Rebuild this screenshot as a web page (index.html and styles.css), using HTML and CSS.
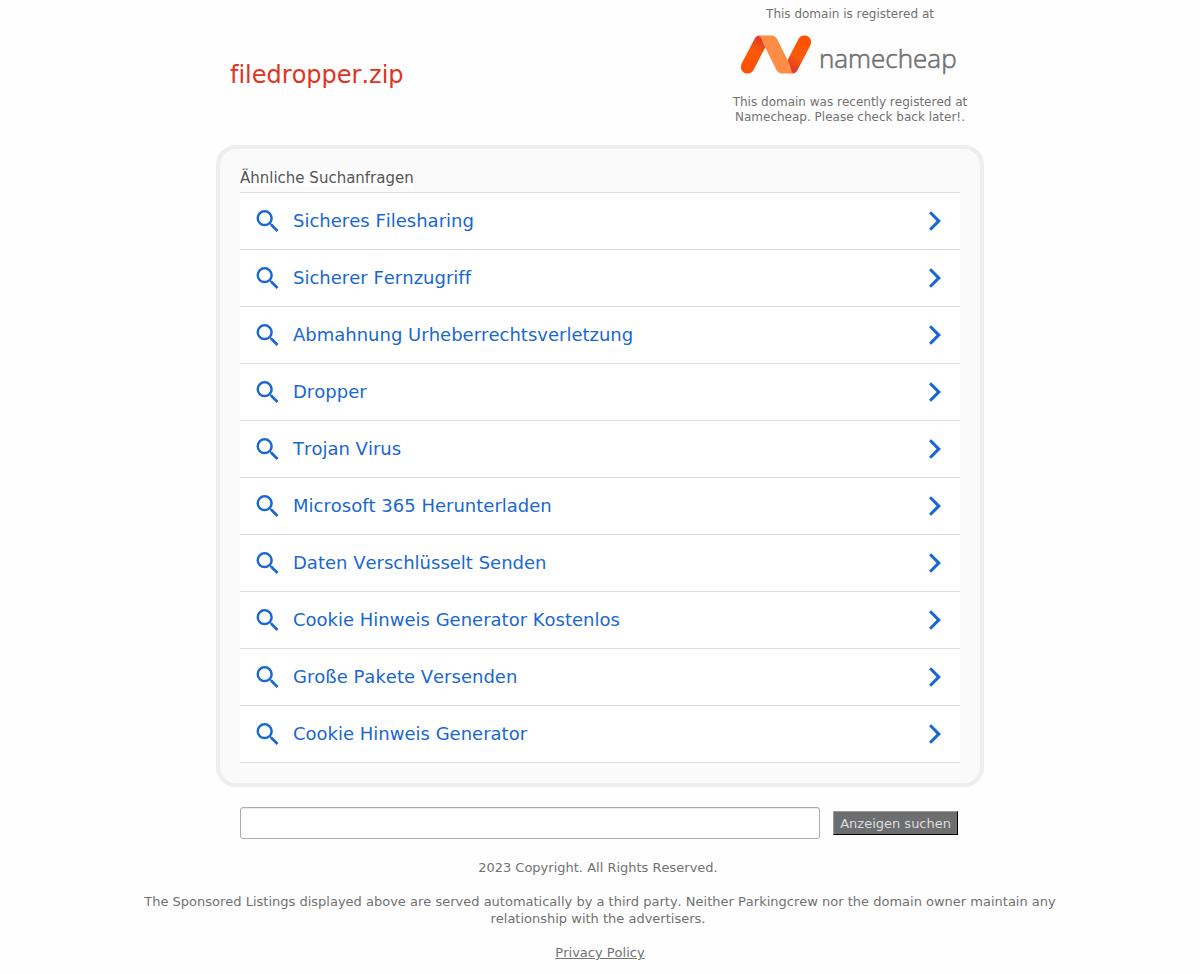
FILE: index.html
```
<!DOCTYPE html>
<html lang="de">
<head>
<meta charset="utf-8">
<meta name="viewport" content="width=device-width, initial-scale=1">
<title>filedropper.zip</title>
<link rel="stylesheet" href="styles.css">
</head>
<body>
<svg class="sprite" aria-hidden="true">
  <symbol id="search" viewBox="3 3 17.5 17.5"><path d="M15.5 14h-.79l-.28-.27A6.471 6.471 0 0 0 16 9.500 6.500 6.500 0 1 0 9.500 16c1.610 0 3.090-.590 4.230-1.570l.270.280v.790l5 4.990L20.490 19l-4.990-5zm-6 0C7.010 14 5 11.990 5 9.500S7.010 5 9.500 5 14 7.010 14 9.500 11.990 14 9.500 14z"/></symbol>
  <symbol id="chevron" viewBox="0.5 0.5 12.2 20"><path d="M2.700 .500.500 2.700 8.200 10.500.500 18.300l2.200 2.200L12.700 10.500z"/></symbol>
</svg>
<header class="header">
  <h1 class="domain">filedropper.zip</h1>
  <div class="registrar">
    <p class="registrar-text">This domain is registered at</p>
    <svg class="logo" viewBox="0 0 220 44" role="img" aria-label="namecheap">
      <defs>
        <linearGradient id="left" gradientUnits="userSpaceOnUse" x1="8" y1="36" x2="22" y2="6"><stop offset="0" stop-color="#ff5000"/><stop offset=".6" stop-color="#fa5a08"/><stop offset="1" stop-color="#dc3a2c"/></linearGradient>
        <linearGradient id="right" gradientUnits="userSpaceOnUse" x1="66" y1="6" x2="51" y2="36"><stop offset="0" stop-color="#ff5000"/><stop offset=".6" stop-color="#fa5a08"/><stop offset="1" stop-color="#dc3a2c"/></linearGradient>
      </defs>
      <path d="M20 2.500C17 2.500 15.500 4 14.500 6L1.700 30.500C-.500 35 2 40.500 7.500 40.500c3 0 5-1.500 6.300-4L27 11z" fill="url(#left)"/>
      <path d="M52 40.500c3 0 4.500-1.500 5.500-3.500L70.300 12.500C72.500 8 70 2.500 64.500 2.500c-3 0-5 1.500-6.300 4L45 32z" fill="url(#right)"/>
      <path d="M19 2.500H31c3 0 5 1.500 6.300 4L49 30c2.500 5 1.500 9 5 10.500H42.500c-3 0-5-1.500-6.300-4L23.500 11C21.800 7 21.500 3.500 17 2.500z" fill="#ff8c44"/>
      <text class="logo-text" x="79" y="35">namecheap</text>
    </svg>
    <p class="registrar-text">This domain was recently registered at Namecheap. Please check back later!.</p>
  </div>
</header>
<main class="content">
  <section class="panel">
    <h2 class="panel-title"><span class="panel-label">Ähnliche Suchanfragen</span></h2>
    <nav class="links">
      <a class="row" href="#"><svg class="search-icon"><use href="#search"/></svg><span class="term">Sicheres Filesharing</span><svg class="chevron"><use href="#chevron"/></svg></a>
      <a class="row" href="#"><svg class="search-icon"><use href="#search"/></svg><span class="term">Sicherer Fernzugriff</span><svg class="chevron"><use href="#chevron"/></svg></a>
      <a class="row" href="#"><svg class="search-icon"><use href="#search"/></svg><span class="term">Abmahnung Urheberrechtsverletzung</span><svg class="chevron"><use href="#chevron"/></svg></a>
      <a class="row" href="#"><svg class="search-icon"><use href="#search"/></svg><span class="term">Dropper</span><svg class="chevron"><use href="#chevron"/></svg></a>
      <a class="row" href="#"><svg class="search-icon"><use href="#search"/></svg><span class="term">Trojan Virus</span><svg class="chevron"><use href="#chevron"/></svg></a>
      <a class="row" href="#"><svg class="search-icon"><use href="#search"/></svg><span class="term">Microsoft 365 Herunterladen</span><svg class="chevron"><use href="#chevron"/></svg></a>
      <a class="row" href="#"><svg class="search-icon"><use href="#search"/></svg><span class="term">Daten Verschlüsselt Senden</span><svg class="chevron"><use href="#chevron"/></svg></a>
      <a class="row" href="#"><svg class="search-icon"><use href="#search"/></svg><span class="term">Cookie Hinweis Generator Kostenlos</span><svg class="chevron"><use href="#chevron"/></svg></a>
      <a class="row" href="#"><svg class="search-icon"><use href="#search"/></svg><span class="term">Große Pakete Versenden</span><svg class="chevron"><use href="#chevron"/></svg></a>
      <a class="row" href="#"><svg class="search-icon"><use href="#search"/></svg><span class="term">Cookie Hinweis Generator</span><svg class="chevron"><use href="#chevron"/></svg></a>
    </nav>
  </section>
  <form class="search-form">
    <input class="search-input" type="text" aria-label="Anzeigen suchen">
    <button class="search-button" type="submit">Anzeigen suchen</button>
  </form>
</main>
<footer class="footer">
  <p class="copyright">2023 Copyright. All Rights Reserved.&nbsp;</p>
  <p class="notice">The Sponsored Listings displayed above are served automatically by a third party. Neither Parkingcrew nor the domain owner maintain any relationship with the advertisers.&nbsp;</p>
  <a class="privacy" href="#">Privacy Policy</a>
</footer>
</body>
</html>
```
FILE: styles.css
```
* { box-sizing: border-box; }

body {
  margin: 0;
  background: #fefefe;
  color: #717171;
  font-family: "DejaVu Sans", Verdana, sans-serif;
  font-size: 13px;
  line-height: 17px;
  font-kerning: none;
  font-variant-ligatures: none;
}

h1, h2, p { margin: 0; font-weight: 400; }

.sprite { display: block; width: 0; height: 0; }

.header {
  display: flex;
  justify-content: space-between;
  align-items: center;
  max-width: 740px;
  margin: 0 auto;
  padding: 7px 0 20px;
}

.domain { padding-top: 18px; color: #e0341f; font-size: 24px; line-height: 32px; }

.registrar {
  display: flex;
  flex-direction: column;
  align-items: center;
  width: 240px;
  text-align: center;
}

.registrar-text { font-size: 12px; line-height: 15px; }

.logo { width: 220px; height: 44px; margin: 11px 0 18px; }

.logo-text {
  font-family: "Open Sans", sans-serif;
  font-size: 26px;
  font-weight: 300;
  fill: #717171;
  stroke: #717171;
  stroke-width: 0.6;
}

.content { max-width: 768px; margin: 0 auto; }

.panel {
  padding: 20px;
  border: 4px solid #eee;
  border-radius: 20px;
  background: #fafafa;
}

.panel-title {
  padding-bottom: 5px;
  color: #555;
  font-size: 15px;
  line-height: 18px;
}

.panel-label { background: #fefefe; }

.links { border-top: 1px solid #dadce0; }

.row {
  display: flex;
  align-items: center;
  height: 57px;
  padding: 0 19px 0 16px;
  border-bottom: 1px solid #dadce0;
  background: #fff;
  color: #1967d2;
  font-size: 18px;
  line-height: 22px;
  text-decoration: none;
}

.term { flex: 1; }

.search-icon { width: 23px; height: 22px; margin-right: 14px; fill: currentColor; }

.chevron { width: 12px; height: 20px; fill: currentColor; }

.search-form {
  display: flex;
  align-items: center;
  gap: 13px;
  padding: 20px 26px 0 24px;
}

.search-input {
  flex: 1;
  min-width: 0;
  height: 32px;
  padding: 0 8px;
  border: 1px solid #aaa;
  border-radius: 3px;
  background: #fff;
  box-shadow: inset 0 1px 0 #eee;
  font: inherit;
}

.search-button {
  height: 24px;
  padding: 0 6px;
  border: 1px solid;
  border-color: #999 #000 #000 #999;
  background: #6d6e70;
  color: #ddd;
  font: inherit;
}

.footer {
  max-width: 960px;
  margin: 0 auto;
  padding: 20px 16px 12px;
  text-align: center;
}

.copyright, .notice { margin-bottom: 17px; }

.privacy { color: inherit; }
```
